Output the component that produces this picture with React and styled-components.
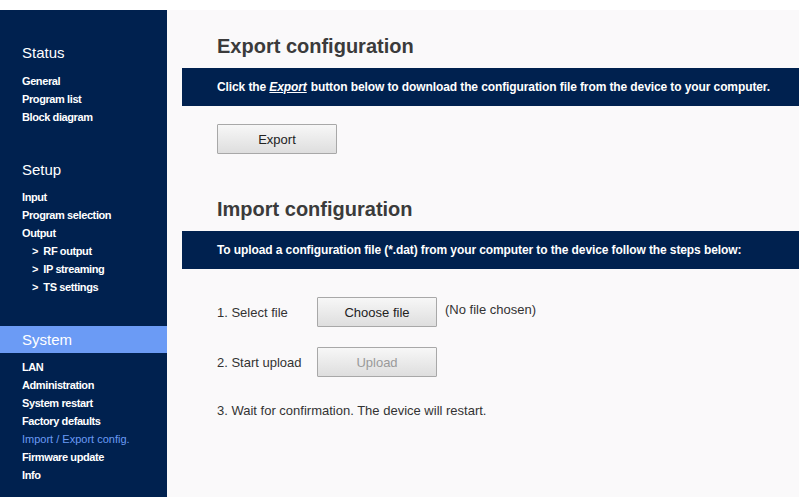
import styled, { createGlobalStyle } from "styled-components";

const GlobalStyle = createGlobalStyle`
  html, body {
    margin: 0;
    padding: 0;
    background: #ffffff;
    font-family: "Liberation Sans", Arial, sans-serif;
  }
`;

const Page = styled.div`
  padding-top: 10px;
  height: 497px;
  box-sizing: border-box;
  display: flex;
  overflow: hidden;
`;

const Sidebar = styled.nav`
  width: 167px;
  flex-shrink: 0;
  background: #00214f;
  padding-top: 34px;
  box-sizing: border-box;
`;

const Group = styled.div`
  margin-bottom: ${(p) => p.$gap || 0}px;
`;

const GroupTitle = styled.div`
  font-size: 15px;
  line-height: ${(p) => (p.$active ? 27 : 18)}px;
  color: #ffffff;
  padding-left: 22px;
  margin-bottom: ${(p) => p.$space}px;
  background: ${(p) => (p.$active ? "#6b9bf5" : "transparent")};
`;

const NavItem = styled.div`
  font-size: 11px;
  line-height: 18px;
  font-weight: ${(p) => (p.$current ? 400 : 700)};
  letter-spacing: ${(p) => (p.$current ? 0 : -0.4)}px;
  color: ${(p) => (p.$current ? "#6b9bf5" : "#ffffff")};
  padding-left: ${(p) => (p.$sub ? 32 : 22)}px;
  white-space: nowrap;
`;

const Main = styled.main`
  flex: 1;
  background: #faf9fa;
  padding-left: 15px;
  padding-top: 24px;
  color: #333333;
`;

const Heading = styled.h2`
  margin: ${(p) => p.$top || 0}px 0 10px;
  padding-left: 35px;
  font-size: 20px;
  line-height: 24px;
  font-weight: 700;
  color: #3b3b3b;
`;

const Banner = styled.div`
  height: 38px;
  display: flex;
  align-items: center;
  padding-left: 35px;
  background: #00214f;
  color: #ffffff;
  font-size: 12px;
  font-weight: 700;
  letter-spacing: -0.1px;
  white-space: nowrap;

  & em {
    text-decoration: underline;
    margin-right: 4px;
  }
`;

const Block = styled.div`
  padding-left: 35px;
  margin-top: ${(p) => p.$top || 0}px;
`;

const Button = styled.button`
  width: 120px;
  height: 30px;
  font-family: inherit;
  font-size: 13px;
  color: ${(p) => (p.disabled ? "#9a9a9a" : "#222222")};
  background: linear-gradient(#f7f7f7, #dedede);
  border: 1px solid #a8a8a8;
  border-radius: 1px;
  padding: 0;
`;

const Step = styled.div`
  display: flex;
  align-items: center;
  font-size: 13px;
  margin-bottom: ${(p) => p.$gap || 0}px;
`;

const StepLabel = styled.span`
  width: 100px;
`;

const Note = styled.span`
  margin-left: 8px;
  align-self: flex-start;
  padding-top: 5px;
`;

const StepText = styled.div`
  font-size: 13px;
  line-height: 14px;
`;

const nav = [
  {
    title: "Status",
    gap: 35,
    space: 10,
    items: [{ label: "General" }, { label: "Program list" }, { label: "Block diagram" }],
  },
  {
    title: "Setup",
    gap: 30,
    space: 9,
    items: [
      { label: "Input" },
      { label: "Program selection" },
      { label: "Output" },
      { label: ">  RF output", sub: true },
      { label: ">  IP streaming", sub: true },
      { label: ">  TS settings", sub: true },
    ],
  },
  {
    title: "System",
    active: true,
    space: 5,
    items: [
      { label: "LAN" },
      { label: "Administration" },
      { label: "System restart" },
      { label: "Factory defaults" },
      { label: "Import / Export config.", current: true },
      { label: "Firmware update" },
      { label: "Info" },
    ],
  },
];

export default function App() {
  return (
    <>
      <GlobalStyle />
      <Page>
        <Sidebar>
          {nav.map((g) => (
            <Group key={g.title} $gap={g.gap}>
              <GroupTitle $active={g.active} $space={g.space}>
                {g.title}
              </GroupTitle>
              {g.items.map((it) => (
                <NavItem key={it.label} $sub={it.sub} $current={it.current}>
                  {it.label.replace(/ {2}/, "\u00a0\u00a0")}
                </NavItem>
              ))}
            </Group>
          ))}
        </Sidebar>

        <Main>
          <Heading>Export configuration</Heading>
          <Banner>
            Click the&nbsp;<em>Export</em> button below to download the configuration file from the device to your computer.
          </Banner>
          <Block $top={18}>
            <Button>Export</Button>
          </Block>

          <Heading $top={43}>Import configuration</Heading>
          <Banner>
            To upload a configuration file (*.dat) from your computer to the device follow the steps below:
          </Banner>
          <Block $top={28}>
            <Step $gap={20}>
              <StepLabel>1. Select file</StepLabel>
              <Button>Choose file</Button>
              <Note>(No file chosen)</Note>
            </Step>
            <Step $gap={27}>
              <StepLabel>2. Start upload</StepLabel>
              <Button disabled>Upload</Button>
            </Step>
            <StepText>3. Wait for confirmation. The device will restart.</StepText>
          </Block>
        </Main>
      </Page>
    </>
  );
}
